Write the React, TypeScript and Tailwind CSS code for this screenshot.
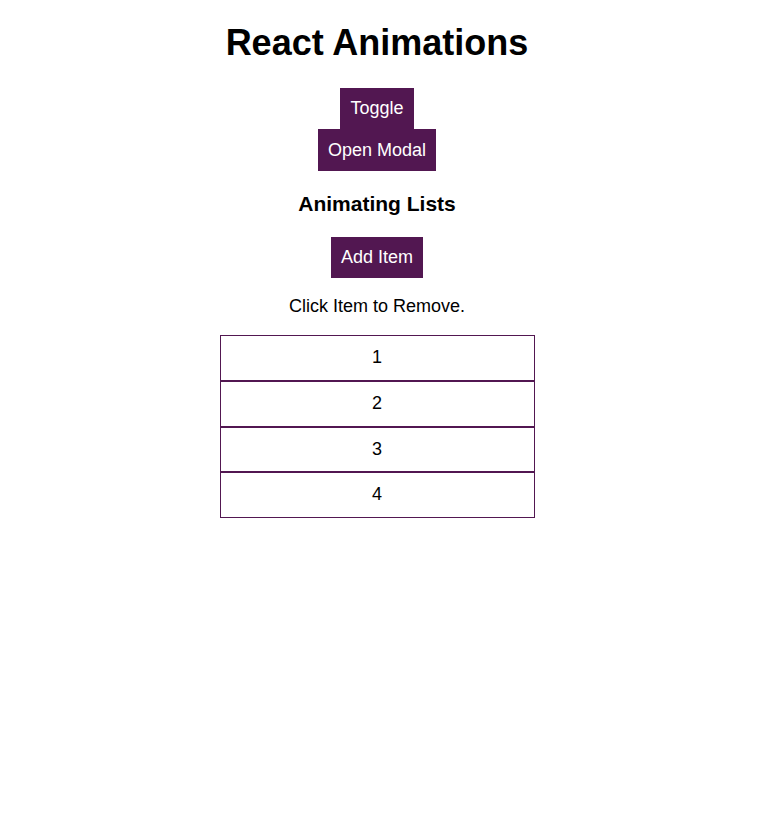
export default function App() {
  const items = [1, 2, 3, 4];
  const btn =
    "block mx-auto bg-[#521751] text-white px-2.5 py-2.5 text-[18px] leading-[21px]";

  return (
    <div className="min-h-screen bg-white pr-[4px] text-center text-black font-['Liberation_Sans',Arial,sans-serif] text-[18px]">
      <h1 className="pt-[22px] text-[36px] font-bold leading-[41px]">React Animations</h1>
      <div className="mt-[25px]">
        <button type="button" className={btn}>Toggle</button>
        <button type="button" className={btn + " h-[42px]"}>Open Modal</button>
      </div>
      <h3 className="mt-[21px] text-[21px] font-bold leading-[24px]">Animating Lists</h3>
      <button type="button" className={btn + " mt-[21px]"}>Add Item</button>
      <p className="mt-[18px] leading-[21px]">Click Item to Remove.</p>
      <ul className="mx-auto mt-[18px] w-[315px]">
        {items.map((n) => (
          <li key={n} className="border border-[#521751] leading-[43.75px]">
            {n}
          </li>
        ))}
      </ul>
    </div>
  );
}
